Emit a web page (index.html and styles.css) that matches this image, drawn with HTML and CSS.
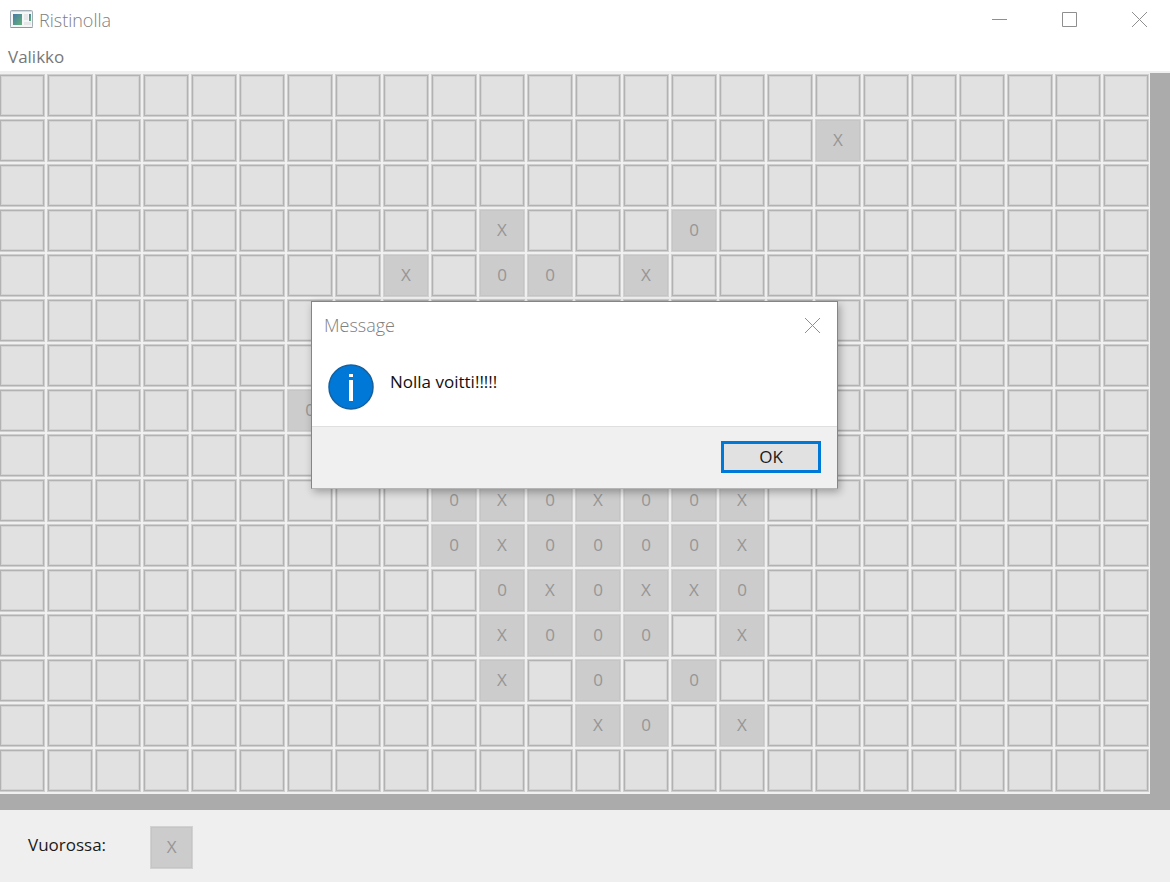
FILE: index.html
```html
<!DOCTYPE html>
<html lang="fi">
<head>
<meta charset="utf-8">
<title>Ristinolla</title>
<link rel="stylesheet" href="styles.css">
</head>
<body>
<header class="titlebar">
  <svg class="app-icon" width="24" height="20" viewBox="0 0 24 20" aria-hidden="true">
    <defs>
      <linearGradient id="pane" x1="0" y1="0" x2="1" y2="1"><stop offset="0" stop-color="#4879a8"/><stop offset="1" stop-color="#62b377"/></linearGradient>
    </defs>
    <rect x="1.500" y=".5" width="22" height="17" rx="1" fill="#f4f6f7" stroke="#a3adb5"/>
    <path d="M2 1.500h21" stroke="#d3d9dd"/>
    <path d="M1.500 17.500h22" stroke="#8e989f"/>
    <rect x="4" y="4" width="9" height="11" fill="url(#pane)"/>
    <rect x="15" y="4" width="4" height="6" fill="#e6e7e8"/>
    <rect x="15" y="12" width="7" height="3" fill="#e6e7e8"/>
    <rect x="20" y="4" width="2" height="7" fill="url(#pane)"/>
  </svg>
  <h1 class="title">Ristinolla</h1>
  <div class="window-controls">
    <button class="window-button" type="button" aria-label="Minimize"><svg width="15" height="15" viewBox="0 0 15 15"><path d="M0 7.5h15"/></svg></button>
    <button class="window-button" type="button" aria-label="Maximize"><svg width="15" height="15" viewBox="0 0 15 15"><path d="M.5.5h14v14H.5z"/></svg></button>
    <button class="window-button" type="button" aria-label="Close"><svg width="15" height="15" viewBox="0 0 15 15"><path d="M0 0l15 15M15 0L0 15"/></svg></button>
  </div>
</header>
<nav class="menubar"><button class="menu" type="button">Valikko</button></nav>
<main class="viewport"><div class="board" id="board"></div></main>
<footer class="status">
  <span class="status-label" id="turn-label">Vuorossa:</span>
  <button class="turn" type="button" disabled aria-labelledby="turn-label">X</button>
</footer>
<section class="dialog" role="dialog" aria-labelledby="dialog-title">
  <header class="dialog-head">
    <h2 class="title" id="dialog-title">Message</h2>
    <button class="dialog-close" type="button" aria-label="Close"><svg width="15" height="15" viewBox="0 0 15 15"><path d="M0 0l15 15M15 0L0 15"/></svg></button>
  </header>
  <div class="dialog-body">
    <svg width="46" height="46" viewBox="0 0 46 46" aria-hidden="true">
      <circle cx="23" cy="23" r="22" fill="#0078d7" stroke="#15609f" stroke-width="1.5"/>
      <path d="M21 10h4v3h-4zM21 16h4v21h-4z" fill="#fff"/>
    </svg>
    <p class="message">Nolla voitti!!!!!</p>
  </div>
  <div class="dialog-actions"><button class="ok" type="button">OK</button></div>
</section>
<script src="board.js"></script>
</body>
</html>
```
FILE: styles.css
```css
* { box-sizing: border-box; }
body {
  display: flex;
  flex-direction: column;
  min-height: 100vh;
  margin: 0;
  overflow: hidden;
  background: #efefef;
  color: #1a1a1a;
  font: 17px/24px "Open Sans", "Noto Sans", sans-serif;
}
button { margin: 0; padding: 0; border: 0; background: none; color: inherit; font: inherit; }
h1, h2, p { margin: 0; }
svg { display: block; flex: none; }
.titlebar { display: flex; align-items: center; height: 40px; padding-left: 9px; background: #fff; }
.title { color: #808080; font-size: 18px; font-weight: 300; line-height: 24px; }
.app-icon { margin-right: 6px; }
.window-controls { display: flex; margin-left: auto; }
.window-button { display: flex; align-items: center; justify-content: center; width: 70px; height: 40px; padding: 0 0 1px 8px; }
.window-button path, .dialog-close path { fill: none; stroke: #8f8f8f; }
.menubar { height: 31px; padding: 5px 8px; background: #fff; }
.menu { display: block; color: #777; }
.viewport { height: 739px; padding-right: 20px; overflow: hidden; border-top: 2px solid #efefef; background: #ababab; }
.board {
  display: grid;
  grid-template-columns: repeat(24, 46px);
  grid-auto-rows: 43px;
  gap: 2px;
  width: max-content;
  margin-left: -1px;
  padding: 1px 1px 2px 0;
  background: #f0f0f0;
}
.cell { border: 1px solid #cfcfcf; background: #e1e1e1; box-shadow: inset 0 0 0 1px #b2b2b2, inset 0 0 0 2px #d3d3d3; }
.cell:disabled, .turn { padding-bottom: 2px; border: 1px solid #d2d2d2; background: #ccc; box-shadow: inset 0 0 0 1px #c5c5c5; color: #969696; }
.status { display: flex; align-items: center; gap: 44px; padding: 16px 28px 14px; }
.status-label { padding-bottom: 6px; }
.turn { width: 43px; height: 43px; }
.dialog {
  position: absolute;
  left: 311px;
  top: 301px;
  width: 527px;
  border: 1px solid #858585;
  border-bottom-color: #b5b5b5;
  background: #fff;
  box-shadow: 2px 3px 8px rgba(0, 0, 0, .3);
}
.dialog-head { display: flex; align-items: center; justify-content: space-between; height: 46px; padding: 0 17px 0 12px; }
.dialog-body { display: flex; align-items: flex-start; gap: 16px; height: 78px; padding: 16px; }
.message { padding-top: 6px; color: #111; }
.dialog-actions { display: flex; justify-content: flex-end; padding: 14px 16px 15px; border-top: 1px solid #dfdfdf; background: #f0f0f0; }
.ok { width: 100px; height: 32px; border: 3px solid #0078d7; background: #e1e1e1; }
```
FILE: board.js
```js
const rows = [
  "........................",
  ".................X......",
  "........................",
  "..........X...0.........",
  "........X.00.X..........",
  "........................",
  "........................",
  "......0.................",
  "........................",
  ".........0X0X00X........",
  ".........0X0000X........",
  "..........0X0XX0........",
  "..........X000.X........",
  "..........X.0.0.........",
  "............X0.X........",
  "........................"
];
const board = document.getElementById("board");
rows.forEach((row, r) => [...row].forEach((mark, c) => {
  const cell = document.createElement("button");
  cell.type = "button";
  cell.className = "cell";
  cell.setAttribute("aria-label", `Row ${r + 1}, column ${c + 1}`);
  if (mark !== ".") {
    cell.textContent = mark;
    cell.disabled = true;
  }
  board.append(cell);
}));
```
